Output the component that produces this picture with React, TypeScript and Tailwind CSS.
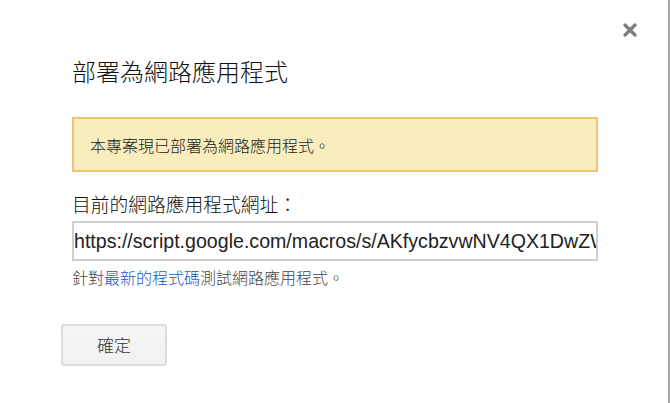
import React from "react";

const cjk = {
  fontFamily:
    '"Noto Sans CJK TC", "Noto Sans CJK SC", "Liberation Sans", Arial, sans-serif',
};

const App = () => {
  return (
    <div
      className="relative w-[670px] h-[403px] bg-white border-r-2 border-[#a9a9a9] overflow-hidden"
      style={cjk}
    >
      <button className="absolute top-[23px] left-[623px] w-[14px] h-[14px] flex items-center justify-center">
        <svg width="14" height="14" viewBox="0 0 14 14">
          <path
            d="M2 2 L12 12 M12 2 L2 12"
            stroke="#7d7d7d"
            strokeWidth="3.2"
            strokeLinecap="round"
          />
        </svg>
      </button>

      <div className="pl-[72px] pt-[55px] w-[598px] flex flex-col">
        <h2 className="text-[24px] leading-[32px] font-light text-[#111]">
          部署為網路應用程式
        </h2>

        <div className="mt-[30px] h-[55px] flex items-center pl-[16px] bg-[#f9edbe] border-2 border-[#f0c36d]">
          <p className="text-[16px] leading-[24px] font-light text-[#222]">
            本專案現已部署為網路應用程式。
          </p>
        </div>

        <label className="mt-[19px] text-[18.75px] leading-[25px] font-light text-[#111]">
          目前的網路應用程式網址：
        </label>

        <input
          type="text"
          readOnly
          value="https://script.google.com/macros/s/AKfycbzvwNV4QX1DwZWx9kLqP0sT3nYbVhR8cJeUaMg/exec"
          className="mt-[5px] h-[40px] w-[526px] pl-0 border-2 border-[#cfcfcf] outline-none text-[19.6px] text-[#222]"
          style={{ fontFamily: '"Liberation Sans", Arial, sans-serif' }}
        />

        <p className="mt-[6px] text-[16px] leading-[20px] font-light text-[#444]">
          針對<a className="text-[#1155cc]">最新的程式碼</a>測試網路應用程式。
        </p>

        <div className="mt-[37px]">
          <button className="-ml-[11px] w-[106px] h-[42px] rounded-[3px] border-2 border-[#dcdcdc] bg-gradient-to-b from-[#f5f5f5] to-[#f1f1f1] text-[17px] font-light text-[#333]">
            確定
          </button>
        </div>
      </div>
    </div>
  );
};

export default App;
